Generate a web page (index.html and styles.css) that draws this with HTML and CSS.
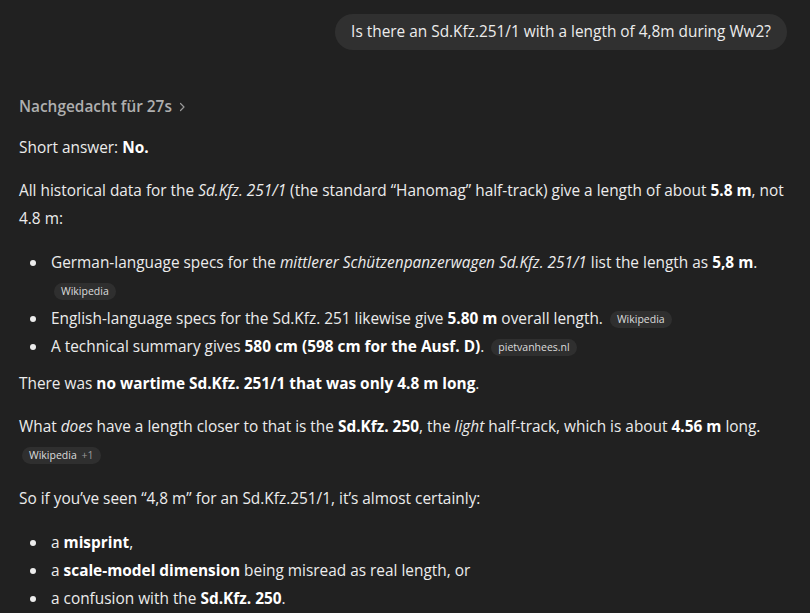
FILE: index.html
```html
<!DOCTYPE html>
<html lang="en">
<head>
<meta charset="utf-8">
<link rel="stylesheet" href="styles.css">
</head>
<body>
<div class="page">
  <div class="user-row">
    <div class="bubble">Is there an Sd.Kfz.251/1 with a length of 4,8m during Ww2?</div>
  </div>
  <div class="answer">
    <div class="thought">Nachgedacht für 27s <svg class="chev" width="8" height="10" viewBox="0 0 8 10"><path d="M2.5 1.5 L6 5 L2.5 8.5" fill="none" stroke="currentColor" stroke-width="1.2" stroke-linecap="round" stroke-linejoin="round"/></svg></div>
    <p>Short answer: <b>No.</b></p>
    <p>All historical data for the <i>Sd.Kfz. 251/1</i> (the standard “Hanomag” half-track) give a length of about <b>5.8 m</b>, not 4.8 m:</p>
    <ul>
      <li>German-language specs for the <i>mittlerer Schützenpanzerwagen Sd.Kfz. 251/1</i> list the length as <b>5,8 m</b>. <span class="pill">Wikipedia</span></li>
      <li>English-language specs for the Sd.Kfz. 251 likewise give <b>5.80 m</b> overall length. <span class="pill">Wikipedia</span></li>
      <li>A technical summary gives <b>580 cm (598 cm for the Ausf. D)</b>. <span class="pill">pietvanhees.nl</span></li>
    </ul>
    <p>There was <b>no wartime Sd.Kfz. 251/1 that was only 4.8 m long</b>.</p>
    <p>What <i>does</i> have a length closer to that is the <b>Sd.Kfz. 250</b>, the <i>light</i> half-track, which is about <b>4.56 m</b> long. <span class="pill">Wikipedia <span class="more">+1</span></span></p>
    <p class="lead">So if you’ve seen “4,8 m” for an Sd.Kfz.251/1, it’s almost certainly:</p>
    <ul>
      <li>a <b>misprint</b>,</li>
      <li>a <b>scale-model dimension</b> being misread as real length, or</li>
      <li>a confusion with the <b>Sd.Kfz. 250</b>.</li>
    </ul>
  </div>
</div>
</body>
</html>
```
FILE: styles.css
```css
html, body {
  margin: 0;
  padding: 0;
  background: #212121;
}
body {
  font-family: "Open Sans", "Noto Sans", sans-serif;
  font-size: 15.4px;
  color: #ececec;
  line-height: 28px;
  overflow: hidden;
}
.page {
  padding: 14px 23px 0 19px;
}
.user-row {
  display: flex;
  justify-content: flex-end;
}
.bubble {
  background: #303030;
  border-radius: 18px;
  padding: 4px 16px;
  line-height: 28px;
}
.answer {
  margin-top: 43px;
}
.thought {
  color: #afafaf;
  font-weight: 600;
  display: flex;
  align-items: center;
  gap: 6px;
  margin-bottom: 13px;
}
.chev { color: #9a9a9a; }
p {
  margin: 0 0 15px;
}
p.lead {
  margin-top: 16px;
}
b { font-weight: 700; color: #fff; }
ul {
  list-style: none;
  margin: 16px 0 9px;
  padding-left: 32px;
}
li::before {
  content: "";
  display: inline-block;
  width: 6px;
  height: 6px;
  border-radius: 50%;
  background: #ececec;
  margin-left: -21px;
  margin-right: 15px;
  vertical-align: 2px;
}
.pill {
  display: inline-block;
  background: #2f2f2f;
  color: #dcdcdc;
  font-size: 10.5px;
  line-height: 17px;
  padding: 0 7px;
  border-radius: 9px;
  vertical-align: 1px;
  margin-left: 3px;
}
.pill .more { color: #9b9b9b; margin-left: 2px; }
```
